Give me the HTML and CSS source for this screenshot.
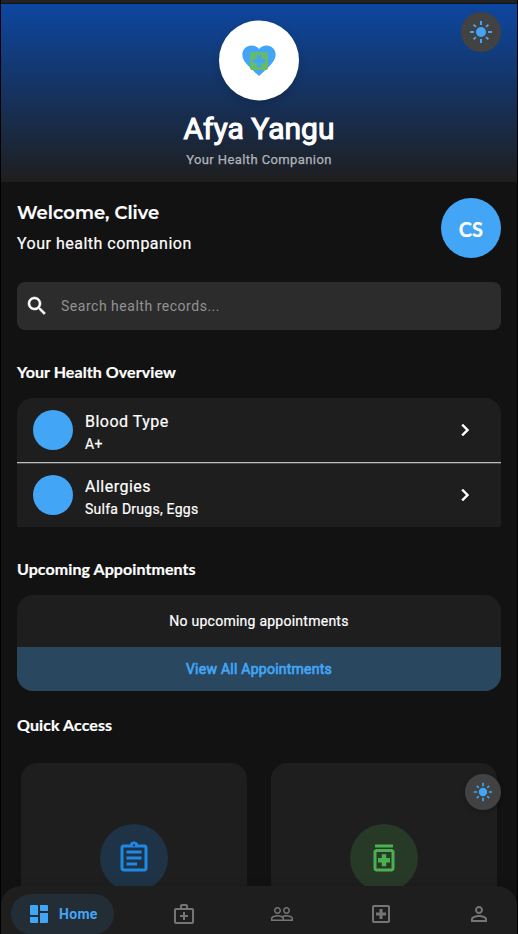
FILE: index.html
```html
<!DOCTYPE html>
<html lang="en">
<head>
<meta charset="utf-8">
<title>Afya Yangu</title>
<link rel="stylesheet" href="styles.css">
</head>
<body>
<svg class="defs" width="0" height="0" aria-hidden="true">
  <symbol id="sun" viewBox="0 0 24 24">
    <circle cx="12" cy="12" r="5"/>
    <path fill="none" stroke="currentColor" stroke-width="2" d="M1 12h4M19 12h4M12 1v4M12 19v4M4.6 4.6l2.3 2.3M17.1 17.1l2.3 2.3M4.6 19.4l2.3-2.3M17.1 6.900l2.300-2.300"/>
  </symbol>
  <symbol id="chevron" viewBox="0 0 24 24"><path stroke="currentColor" stroke-width=".5" d="M10 6 8.590 7.410 13.170 12l-4.580 4.590L10 18l6-6z"/></symbol>
</svg>
<div class="app">
  <header class="hero">
    <div class="logo">
      <svg class="heart" viewBox="0 0 24 24"><path d="M12 21.350l-1.450-1.320C5.400 15.360 2 12.280 2 8.500 2 5.420 4.420 3 7.500 3c1.740 0 3.410.81 4.500 2.090C13.090 3.810 14.760 3 16.500 3 19.580 3 22 5.420 22 8.500c0 3.780-3.400 6.860-8.550 11.540z"/></svg>
      <svg class="cross" viewBox="0 0 24 24"><path d="M19 3H5c-1.100 0-1.990.9-1.990 2L3 19c0 1.100.9 2 2 2h14c1.100 0 2-.9 2-2V5c0-1.100-.9-2-2-2zm-1 11h-4v4h-4v-4H6v-4h4V6h4v4h4v4z"/></svg>
    </div>
    <h1 class="brand">Afya Yangu</h1>
    <p class="tagline">Your Health Companion</p>
    <button class="theme theme-top" aria-label="Theme"><svg><use href="#sun"/></svg></button>
  </header>
  <main class="content">
    <section class="welcome">
      <div>
        <h2 class="greeting">Welcome, Clive</h2>
        <p class="sub">Your health companion</p>
      </div>
      <div class="avatar">CS</div>
    </section>
    <div class="search">
      <svg viewBox="0 0 24 24"><path stroke="currentColor" stroke-width=".5" d="M15.500 14h-.79l-.28-.27C15.410 12.590 16 11.110 16 9.500 16 5.910 13.090 3 9.500 3S3 5.910 3 9.500 5.910 16 9.500 16c1.610 0 3.090-.59 4.230-1.570l.27.28v.79l5 4.990L20.490 19l-4.990-5zm-6 0C7.010 14 5 11.990 5 9.500S7.010 5 9.500 5 14 7.010 14 9.500 11.990 14 9.500 14z"/></svg>
      <span>Search health records...</span>
    </div>
    <h3 class="heading overview-heading">Your Health Overview</h3>
    <div class="overview">
      <div class="row">
        <span class="dot"></span>
        <div class="info"><p class="label">Blood Type</p><p class="value">A+</p></div>
        <svg class="chev"><use href="#chevron"/></svg>
      </div>
      <div class="row">
        <span class="dot"></span>
        <div class="info"><p class="label">Allergies</p><p class="value">Sulfa Drugs, Eggs</p></div>
        <svg class="chev"><use href="#chevron"/></svg>
      </div>
    </div>
    <h3 class="heading appointments-heading">Upcoming Appointments</h3>
    <div class="appointments">
      <p class="none">No upcoming appointments</p>
      <button class="view-all">View All Appointments</button>
    </div>
    <h3 class="heading quick-heading">Quick Access</h3>
    <div class="quick">
      <div class="tile">
        <span class="tile-icon blue"><svg viewBox="0 0 24 24"><path d="M7 15h7v2H7zm0-4h10v2H7zm0-4h10v2H7zm12-4h-4.180C14.400 1.840 13.300 1 12 1s-2.400.84-2.820 2H5c-1.100 0-2 .9-2 2v14c0 1.100.9 2 2 2h14c1.100 0 2-.9 2-2V5c0-1.100-.9-2-2-2zm-7-.25c.41 0 .75.34.75.75s-.34.75-.75.75-.75-.34-.75-.75.34-.75.75-.75zM19 19H5V5h14v14z"/></svg></span>
      </div>
      <div class="tile">
        <span class="tile-icon green"><svg viewBox="0 0 24 24"><path d="M6 3h12v2H6zm11 3H7c-1.100 0-2 .9-2 2v11c0 1.100.9 2 2 2h10c1.100 0 2-.9 2-2V8c0-1.100-.9-2-2-2zm0 13H7V8h10v11zM10.500 17.500h3V15H16v-3h-2.500V9.500h-3V12H8v3h2.500z"/></svg></span>
      </div>
    </div>
  </main>
  <button class="theme theme-float" aria-label="Theme"><svg><use href="#sun"/></svg></button>
  <nav class="nav">
    <a class="tab active"><svg viewBox="0 0 24 24"><path d="M4 3h6q1 0 1 1v9H4q-1 0-1-1V4q0-1 1-1zm-1 12h8v6H4q-1 0-1-1zm10-4h8v9q0 1-1 1h-7zm0-8h7q1 0 1 1v5h-7q-1 0-1-1z"/></svg><span>Home</span></a>
    <a class="tab"><svg viewBox="0 0 24 24"><path d="M20 6h-4V4c0-1.100-.9-2-2-2h-4c-1.100 0-2 .9-2 2v2H4c-1.100 0-2 .9-2 2v12c0 1.100.9 2 2 2h16c1.100 0 2-.9 2-2V8c0-1.100-.9-2-2-2zM10 4h4v2h-4V4zm10 16H4V8h16v12zM13 10h-2v3H8v2h3v3h2v-3h3v-2h-3z"/></svg></a>
    <a class="tab"><svg viewBox="0 0 24 24"><path d="M16.500 13c-1.200 0-3.070.34-4.500 1-1.430-.67-3.300-1-4.500-1C5.330 13 1 14.080 1 16.250V19h22v-2.750c0-2.170-4.330-3.250-6.500-3.250zm-4 4.500h-10v-1.250c0-.54 2.560-1.750 5-1.750s5 1.210 5 1.750v1.250zm9 0H14v-1.250c0-.46-.2-.86-.52-1.220.88-.3 1.960-.53 3.020-.53 2.440 0 5 1.210 5 1.750v1.250zM7.500 12c1.930 0 3.500-1.570 3.500-3.500S9.430 5 7.500 5 4 6.570 4 8.500 5.570 12 7.500 12zm0-5.500c1.100 0 2 .9 2 2s-.9 2-2 2-2-.9-2-2 .9-2 2-2zm9 5.500c1.930 0 3.500-1.570 3.500-3.500S18.430 5 16.500 5 13 6.570 13 8.500s1.570 3.500 3.500 3.500zm0-5.500c1.100 0 2 .9 2 2s-.9 2-2 2-2-.9-2-2 .9-2 2-2z"/></svg></a>
    <a class="tab"><svg viewBox="0 0 24 24"><path d="M19 3H5c-1.100 0-2 .9-2 2v14c0 1.100.9 2 2 2h14c1.100 0 2-.9 2-2V5c0-1.100-.9-2-2-2zm0 16H5V5h14v14zm-8.500-2h3v-3.500H17v-3h-3.500V7h-3v3.500H7v3h3.500z"/></svg></a>
    <a class="tab"><svg viewBox="0 0 24 24"><path d="M12 6c1.100 0 2 .9 2 2s-.9 2-2 2-2-.9-2-2 .9-2 2-2m0 9c2.700 0 5.800 1.290 6 2v1H6v-.990c.2-.720 3.300-2.010 6-2.010m0-11C9.790 4 8 5.790 8 8s1.790 4 4 4 4-1.790 4-4-1.790-4-4-4zm0 9c-2.670 0-8 1.340-8 4v3h16v-3c0-2.660-5.330-4-8-4z"/></svg></a>
  </nav>
</div>
</body>
</html>
```
FILE: styles.css
```css
* { box-sizing: border-box; margin: 0; padding: 0; }
body { background: #121212; color: #fff; font-family: Roboto, sans-serif; overflow: hidden; }
svg { display: block; fill: currentColor; flex: none; }
button { border: 0; font: inherit; }
.defs { position: absolute; }
.app { position: relative; height: 934px; overflow: hidden; border: solid #000; border-width: 0 1px; background: #121212; }

.hero { position: relative; height: 182px; border-top: 3px solid #222; padding-top: 17px; display: flex; flex-direction: column; align-items: center; background: linear-gradient(#0d47a1, #1e1e1e); box-shadow: inset 0 1px #0c1422; }
.logo { display: grid; place-items: center; width: 80px; height: 80px; border-radius: 50%; background: #fff; box-shadow: 0 3px 8px rgba(0,0,0,.16); transform: translateY(.4px); }
.logo svg { grid-area: 1 / 1; }
.heart { width: 40px; height: 40px; color: #42a5f5; }
.cross { width: 24px; height: 24px; color: #66bb6a; transform: translateY(.6px); }
.brand { margin-top: 11px; font-size: 30px; line-height: 36px; font-weight: 400; -webkit-text-stroke: 1.1px currentColor; white-space: nowrap; }
.tagline { margin-top: 5px; font-size: 13px; line-height: 16px; letter-spacing: .4px; color: #b1b4b9; -webkit-text-stroke: .25px currentColor; white-space: nowrap; }
.theme { position: absolute; display: grid; place-items: center; border-radius: 50%; background: #424242; color: #42a5f5; }
.theme-top { right: 16px; top: 9px; width: 40px; height: 40px; }
.theme-top svg { width: 24px; height: 24px; }
.theme-float { right: 16px; top: 774px; width: 36px; height: 36px; box-shadow: 0 2px 5px rgba(0,0,0,.2); }
.theme-float svg { width: 20px; height: 20px; }

.content { padding: 16px 16px 0; }
.welcome { display: flex; justify-content: space-between; height: 60px; }
.greeting { margin-top: 3px; font: 600 18px/24px Montserrat, Inter, sans-serif; -webkit-text-stroke: .2px currentColor; white-space: nowrap; }
.sub { margin-top: 9px; font-size: 16px; line-height: 20px; letter-spacing: .5px; -webkit-text-stroke: .2px currentColor; }
.avatar { width: 60px; height: 60px; border-radius: 50%; background: #42a5f5; font: 700 20px/62px Lato, sans-serif; letter-spacing: .2px; -webkit-text-stroke: .2px currentColor; text-align: center; }
.search { margin-top: 24px; height: 48px; display: flex; align-items: center; gap: 12px; padding-left: 8px; border-radius: 8px; background: #2c2c2c; color: #fff; }
.search svg { width: 24px; height: 24px; }
.search span { font-size: 14px; letter-spacing: .52px; color: #929292; }
.heading { font: 700 16px/20px Lato, sans-serif; letter-spacing: .08px; -webkit-text-stroke: .2px currentColor; white-space: nowrap; }
.overview-heading { margin-top: 32px; }
.overview { margin-top: 16px; border-radius: 16px 16px 2px 2px; overflow: hidden; background: #1e1e1e; }
.row { display: flex; align-items: center; height: 64px; padding: 0 24px 0 16px; }
.row + .row { height: 65px; border-top: 1px solid #bdbdbd; box-shadow: inset 0 1px #4a4a4a; }
.dot { width: 40px; height: 40px; border-radius: 50%; background: #42a5f5; }
.info { flex: 1; margin-left: 12px; padding-top: 3px; -webkit-text-stroke: .2px currentColor; }
.label { font-size: 16px; line-height: 24px; letter-spacing: .5px; }
.value { font-size: 14px; line-height: 20px; letter-spacing: .25px; }
.chev { width: 24px; height: 24px; }
.appointments-heading { margin-top: 32px; }
.appointments { margin-top: 16px; height: 96px; border-radius: 16px; overflow: hidden; background: #1e1e1e; text-align: center; }
.none { height: 52px; font-size: 14px; line-height: 52px; letter-spacing: .25px; -webkit-text-stroke: .2px currentColor; }
.view-all { display: block; width: 100%; height: 44px; background: #29475f; color: #42a5f5; font-size: 14px; line-height: 44px; font-weight: 400; letter-spacing: .25px; -webkit-text-stroke: .7px currentColor; }
.quick-heading { margin-top: 24px; }
.quick { display: grid; grid-template-columns: 1fr 1fr; gap: 24px; margin: 28px 4px 0; }
.tile { height: 190px; padding-top: 60.5px; border-radius: 16px; background: #1e1e1e; }
.tile-icon { display: grid; place-items: center; width: 68px; height: 68px; margin: 0 auto; border-radius: 50%; }
.tile-icon svg { width: 36px; height: 36px; }
.blue { background: #1f3346; color: #1e88e5; }
.green { background: #273a28; color: #4caf50; }

.nav { position: absolute; left: 0; right: 0; bottom: 0; height: 48px; padding: 8px 10px 0; display: flex; justify-content: space-between; border-radius: 20px 20px 0 0; background: #1e1e1e; box-shadow: 0 -2px 8px rgba(0,0,0,.08); }
.tab { display: flex; align-items: center; height: 40px; padding: 0 16px; border-radius: 20px; color: #757575; }
.tab svg { width: 24px; height: 24px; }
.active { width: 102.500px; gap: 8px; background: #222d36; color: #42a5f5; font-size: 14px; font-weight: 700; letter-spacing: .3px; }
```
